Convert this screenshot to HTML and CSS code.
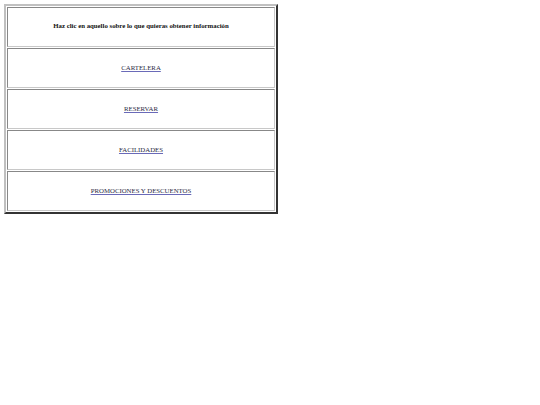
FILE: index.html
```html
<!DOCTYPE html>
<html>
<head>
<meta charset="utf-8">
<link rel="stylesheet" href="styles.css">
</head>
<body>
<table class="menu">
  <tr><td class="head">Haz clic en aquello sobre lo que quieras obtener información</td></tr>
  <tr><td><a href="#">CARTELERA</a></td></tr>
  <tr><td><a href="#">RESERVAR</a></td></tr>
  <tr><td><a href="#">FACILIDADES</a></td></tr>
  <tr><td><a href="#">PROMOCIONES Y DESCUENTOS</a></td></tr>
</table>
</body>
</html>
```
FILE: styles.css
```css
html, body { background: #fff; }
body {
  margin: 4px;
  font-family: "Liberation Serif", "Times New Roman", serif;
  font-size: 6.8px;
}
.menu {
  width: 274px;
  border: 2px solid;
  border-color: #c0c0c0 #333 #333 #c0c0c0;
  border-spacing: 1px;
}
.menu td {
  height: 37px;
  text-align: center;
  vertical-align: middle;
  border: 1px solid;
  border-color: #888 #c8c8c8 #c8c8c8 #888;
  padding: 0 0 1px 0;
}
.menu .head { font-weight: bold; color: #111; padding-bottom: 3px; height: 35px; }
.menu a { color: #2a2a44; text-decoration-color: #6a6ab8; }
```
